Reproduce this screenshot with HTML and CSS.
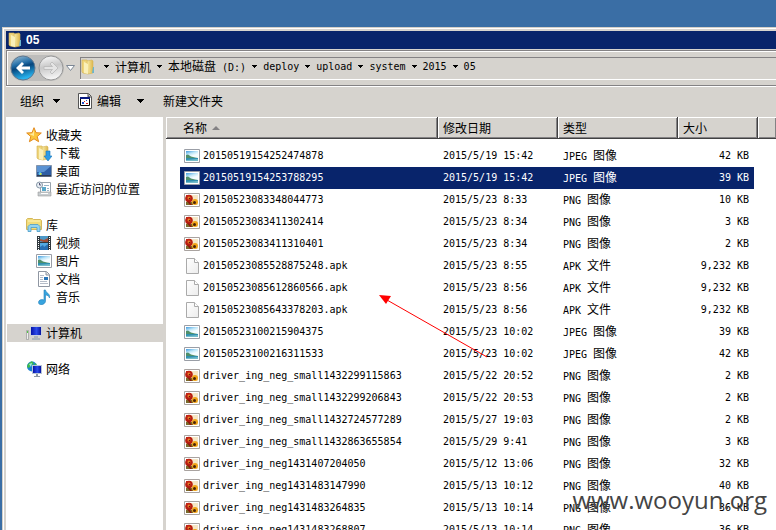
FILE: index.html
```html
<!DOCTYPE html>
<html lang="zh-CN">
<head>
<meta charset="utf-8">
<title>05</title>
<link rel="stylesheet" href="styles.css">
</head>
<body>
<svg class="sprite" aria-hidden="true">
  <defs>
    <linearGradient id="gold" x2="1"><stop stop-color="#f8edaa"/><stop offset="1" stop-color="#ddb64c"/></linearGradient>
    <linearGradient id="sky" y2="1" x2=".4"><stop stop-color="#3f9be0"/><stop offset=".35" stop-color="#bfe6f8"/><stop offset=".6" stop-color="#f4fcff"/></linearGradient>
    <linearGradient id="blue" y2="1" x2=".3"><stop stop-color="#a6c6d8"/><stop offset=".4" stop-color="#256fa8"/><stop offset=".55" stop-color="#06457c"/><stop offset="1" stop-color="#28b3ee"/></linearGradient>
    <linearGradient id="silver" y2="1" x2=".2"><stop stop-color="#ffffff"/><stop offset=".5" stop-color="#c8c8c8"/><stop offset="1" stop-color="#f4f4f4"/></linearGradient>
    <linearGradient id="screen" x2="1"><stop stop-color="#0612a8"/><stop offset=".55" stop-color="#2b4bea"/><stop offset="1" stop-color="#0714a0"/></linearGradient>
    <linearGradient id="paper" x2="1" y2="1"><stop stop-color="#ffffff"/><stop offset="1" stop-color="#ececec"/></linearGradient>
  </defs>
  <symbol id="folder" viewBox="0 0 16 16">
    <path d="M1 1h5l1 2v12l-5-1-1-1z" fill="#eed57c" stroke="#d3b04c" stroke-width=".6"/>
    <path d="M6 2l5-1 1 1v12l-5 1z" fill="url(#gold)" stroke="#d6b558" stroke-width=".6"/>
    <path d="M3 3l4 2v10l-4-1z" fill="#faf0b8"/>
    <path d="M12 8h1v6h-2z" fill="#6bb5cf"/>
  </symbol>
  <symbol id="jpeg" viewBox="0 0 16 16">
    <path d="M.5 1.500h15v13H.5z" fill="#fff" stroke="#9a9ea6"/>
    <path d="M2 3h12v10H2z" fill="url(#sky)"/>
    <path d="M2 7l2-.5 3 2 4 1 3 .5v1H2z" fill="#4f8f6a"/>
    <path d="M2 10h12v3H2z" fill="#2f8fae"/>
    <path d="M2 12l12-1v2H2z" fill="#74bccb"/>
  </symbol>
  <symbol id="png" viewBox="0 0 16 16">
    <path d="M.5 1.500h15v13H.5z" fill="#fff" stroke="#a9a3a0"/>
    <path d="M2 3h12v10H2z" fill="#f6e6c4"/>
    <path d="M2 10h7v3H2z" fill="#7a6a2a"/>
    <circle cx="5" cy="6.500" r="3.800" fill="#b81c10"/>
    <path d="M2 3h4v2H2z" fill="#c22413"/>
    <circle cx="5" cy="6" r="1.500" fill="#f0862a"/><circle cx="5.500" cy="6.500" r=".8" fill="#6a1205"/>
    <path d="M3 9l3 1 2 3H6z" fill="#8c1a0c"/>
    <circle cx="11" cy="10" r="3" fill="#f0a418"/>
    <circle cx="10.500" cy="10.500" r="1.500" fill="#4a240a"/>
  </symbol>
  <symbol id="blank" viewBox="0 0 16 16">
    <path d="M2.500.5h8l4 4v11h-12z" fill="url(#paper)" stroke="#aaa"/><path d="M10.500.5v4h4" fill="#fff" stroke="#aaa"/>
  </symbol>
  <symbol id="star" viewBox="0 0 16 16">
    <path d="M8 .7l2 5 5.300.3-4.100 3.500 1.400 5.200L8 11.800l-4.600 2.900 1.400-5.200L.7 6l5.300-.3z" fill="#fbc63c" stroke="#e28a1e"/><path d="M8 3v6L3 7l3.500-.5z" fill="#ffe99b"/>
  </symbol>
  <symbol id="download" viewBox="0 0 16 16">
    <use href="#folder"/><path d="M10 6h4v5h2l-4 5-4-5h2z" fill="#2e9be5" stroke="#1676b8" stroke-width=".6"/>
  </symbol>
  <symbol id="desktop" viewBox="0 0 16 16">
    <path d="M.5 2.500h15v11H.5z" fill="#2e5ea4" stroke="#8294ab"/><path d="M1 3h14L8 9H1z" fill="#5b93d3"/><path d="M1 12h14v1.500H1z" fill="#2c3a52"/><circle cx="4" cy="10.500" r="1.500" fill="#62c9ef"/><path d="M4 10h1.500v2H4z" fill="#c8e34d"/>
  </symbol>
  <symbol id="recent" viewBox="0 0 16 16">
    <path d="M4.500 1.500h10v10h-10z" fill="#fff" stroke="#9aa4ad"/><path d="M8 4.500h5M11 7.500h2M11 9.500h2" stroke="#9ab4c6"/><path d="M6 6h4v4H6z" fill="#59a7c9"/><path d="M2 11h13v4H2z" fill="#c7cccf" stroke="#9c9c9c" stroke-width=".6"/><path d="M5 12.500h7" stroke="#fff"/><circle cx="3.500" cy="4" r="3" fill="#e8eef3" stroke="#8596a6"/><path d="M3.500 2v2H5" fill="none" stroke="#557"/>
  </symbol>
  <symbol id="library" viewBox="0 0 16 16">
    <path d="M.5 2.500l1-1h5l1 1h7l1 1v9H.5z" fill="#f1dc7b" stroke="#d6b85a"/><path d="M2 4h12" stroke="#fff5ba"/><path d="M4 7.500h8l2 2v5h-3v-4H5v4H2v-5z" fill="#93d4f1" stroke="#4a9cc9" stroke-width=".8"/>
  </symbol>
  <symbol id="video" viewBox="0 0 16 16">
    <path d="M1 1h14v14H1z" fill="#30383d"/><path d="M4 1h8v6H4z" fill="#4c98c7"/><path d="M4 8h8v7H4z" fill="#54a9e0"/><path d="M4 4l4 1 4-2v4H8L4 6z" fill="#a24d34"/><path d="M4 12l3-2 1 2 4-3v6H4z" fill="#286fb2"/><path d="M2.500 2v13M13.500 2v13" stroke="#fff" stroke-dasharray="1 1"/>
  </symbol>
  <symbol id="document" viewBox="0 0 16 16">
    <path d="M2.500.5h8l3 3v12h-11z" fill="#fff" stroke="#8f96a2"/><path d="M10 1v3h3" fill="#ddd" stroke="#8f96a2"/><path d="M4 4.500h4M4 6.500h3M4 8.500h3M4 10.500h7M4 12.500h8" stroke="#b5bcc8"/><path d="M8 6h4v3H8z" fill="#2874b7"/>
  </symbol>
  <symbol id="music" viewBox="0 0 16 16">
    <path d="M8 1h1.500c0 3 5 3 4 8-.6-2-2-3-4-3v6c0 4-7 5-7 1.500C2.500 11 5 10 8 11z" fill="#37a4df" stroke="#2681bb" stroke-width=".6"/>
  </symbol>
  <symbol id="computer" viewBox="0 0 16 16">
    <path d="M.5 5.500h2v9h-2z" fill="#eee" stroke="#999" stroke-width=".7"/><path d="M1 6h1v2H1z" fill="#55c845"/><path d="M4 1h12v10H4z" fill="#cad2dc"/><path d="M5 2h10v8H5z" fill="url(#screen)"/><path d="M8 11h4v2h2v2H6v-2h2z" fill="#adb5bd"/>
  </symbol>
  <symbol id="network" viewBox="0 0 16 16">
    <circle cx="6" cy="5.500" r="5" fill="#1c83d1"/><path d="M2 3l4-3 2 3-3 1-2 3-2-1zM7 5l3-3 1 4-4 4-1-3z" fill="#40bb46"/><path d="M3 3l3-1-1 4z" fill="#9ceadb"/><path d="M6 4h10v9H6z" fill="#b8c5d5"/><path d="M7 5h8v7H7z" fill="url(#screen)"/><path d="M10 13h2v2h2v1H8v-1h2z" fill="#8d98a5"/>
  </symbol>
  <symbol id="edit" viewBox="0 0 14 16">
    <path d="M.5.5h10l3 3v12H.5z" fill="#fff" stroke="#555"/><path d="M10 1v3h3" fill="#aaa" stroke="#555"/><path d="M2.500 4.500h9v8h-9z" fill="#fff" stroke="#000"/><path d="M2 4h10v2H2z" fill="#091a80"/><path d="M4 9h2v2H4zM8 7h1v1H8z" fill="#2250ca"/><path d="M6 8h1v1H6zM8 10h2v1H8z" fill="#df2020"/>
  </symbol>
  <symbol id="caret" viewBox="0 0 5 3"><path d="M0 0h5v1H4v1H3v1H2V2H1V1H0z"/></symbol>
</svg>

<main class="window">
  <header class="titlebar"><svg class="icon"><use href="#folder"/></svg><h1>05</h1></header>

  <div class="navbar">
    <div class="travel">
      <button aria-label="后退"><svg viewBox="0 0 26 26"><circle cx="13" cy="13" r="12" fill="url(#blue)" stroke="#607890"/><path d="M6 13l6-6 2 2-2.500 2.500H20v3h-8.500L14 17l-2 2z" fill="#fff"/></svg></button>
      <button aria-label="前进"><svg viewBox="0 0 26 26"><circle cx="13" cy="13" r="12" fill="url(#silver)" stroke="#999"/><path d="M20 13l-6-6-2 2 2.500 2.500H6v3h8.500L12 17l2 2z" fill="#e4e4e4" stroke="#b8b8b8" stroke-width=".8"/></svg></button>
    </div>
    <button class="history" aria-label="最近的页面"><svg viewBox="0 0 9 6"><path d="M.5.5h8l-4 5z" fill="#fff" stroke="#7c8795"/></svg></button>
    <nav class="address" aria-label="地址">
      <svg class="icon"><use href="#folder"/></svg>
      <svg class="caret"><use href="#caret"/></svg>
      <a href="#" class="zh">计算机</a><svg class="caret"><use href="#caret"/></svg>
      <a href="#"><span class="zh">本地磁盘</span> (D:)</a><svg class="caret"><use href="#caret"/></svg>
      <a href="#">deploy</a><svg class="caret"><use href="#caret"/></svg>
      <a href="#">upload</a><svg class="caret"><use href="#caret"/></svg>
      <a href="#">system</a><svg class="caret"><use href="#caret"/></svg>
      <a href="#">2015</a><svg class="caret"><use href="#caret"/></svg>
      <a href="#">05</a>
    </nav>
  </div>

  <div class="toolbar">
    <button class="zh">组织<svg class="drop" viewBox="0 0 7 4"><path d="M0 0h7v1H6v1H5v1H4v1H3V3H2V2H1V1H0z"/></svg></button>
    <button class="zh edit"><svg class="edit-icon"><use href="#edit"/></svg>编辑</button>
    <button class="more" aria-label="更多"><svg class="drop" viewBox="0 0 7 4"><path d="M0 0h7v1H6v1H5v1H4v1H3V3H2V2H1V1H0z"/></svg></button>
    <button class="zh">新建文件夹</button>
  </div>

  <div class="content">
    <aside class="sidebar zh">
      <ul>
        <li><a href="#"><svg class="icon"><use href="#star"/></svg>收藏夹</a></li>
        <li class="child"><a href="#"><svg class="icon"><use href="#download"/></svg>下载</a></li>
        <li class="child"><a href="#"><svg class="icon"><use href="#desktop"/></svg>桌面</a></li>
        <li class="child"><a href="#"><svg class="icon"><use href="#recent"/></svg>最近访问的位置</a></li>
      </ul>
      <ul>
        <li><a href="#"><svg class="icon"><use href="#library"/></svg>库</a></li>
        <li class="child"><a href="#"><svg class="icon"><use href="#video"/></svg>视频</a></li>
        <li class="child"><a href="#"><svg class="icon"><use href="#jpeg"/></svg>图片</a></li>
        <li class="child"><a href="#"><svg class="icon"><use href="#document"/></svg>文档</a></li>
        <li class="child"><a href="#"><svg class="icon"><use href="#music"/></svg>音乐</a></li>
      </ul>
      <ul><li class="current"><a href="#"><svg class="icon"><use href="#computer"/></svg>计算机</a></li></ul>
      <ul><li><a href="#"><svg class="icon"><use href="#network"/></svg>网络</a></li></ul>
    </aside>

    <section class="files">
      <table>
        <colgroup><col class="c-name"><col class="c-date"><col class="c-type"><col class="c-size"><col></colgroup>
        <thead><tr><th>名称<svg class="sort" viewBox="0 0 8 4"><path d="M4 0l4 4H0z"/></svg></th><th>修改日期</th><th>类型</th><th>大小</th><th></th></tr></thead>
        <tbody>
          <tr><td><svg class="icon"><use href="#jpeg"/></svg>20150519154252474878</td><td>2015/5/19 15:42</td><td>JPEG <span class="zh">图像</span></td><td>42 KB</td></tr>
          <tr class="selected"><td><svg class="icon"><use href="#jpeg"/></svg>20150519154253788295</td><td>2015/5/19 15:42</td><td>JPEG <span class="zh">图像</span></td><td>39 KB</td></tr>
          <tr><td><svg class="icon"><use href="#png"/></svg>20150523083348044773</td><td>2015/5/23 8:33</td><td>PNG <span class="zh">图像</span></td><td>10 KB</td></tr>
          <tr><td><svg class="icon"><use href="#png"/></svg>20150523083411302414</td><td>2015/5/23 8:34</td><td>PNG <span class="zh">图像</span></td><td>3 KB</td></tr>
          <tr><td><svg class="icon"><use href="#png"/></svg>20150523083411310401</td><td>2015/5/23 8:34</td><td>PNG <span class="zh">图像</span></td><td>2 KB</td></tr>
          <tr><td><svg class="icon"><use href="#blank"/></svg>20150523085528875248.apk</td><td>2015/5/23 8:55</td><td>APK <span class="zh">文件</span></td><td>9,232 KB</td></tr>
          <tr><td><svg class="icon"><use href="#blank"/></svg>20150523085612860566.apk</td><td>2015/5/23 8:56</td><td>APK <span class="zh">文件</span></td><td>9,232 KB</td></tr>
          <tr><td><svg class="icon"><use href="#blank"/></svg>20150523085643378203.apk</td><td>2015/5/23 8:56</td><td>APK <span class="zh">文件</span></td><td>9,232 KB</td></tr>
          <tr><td><svg class="icon"><use href="#jpeg"/></svg>20150523100215904375</td><td>2015/5/23 10:02</td><td>JPEG <span class="zh">图像</span></td><td>39 KB</td></tr>
          <tr><td><svg class="icon"><use href="#jpeg"/></svg>20150523100216311533</td><td>2015/5/23 10:02</td><td>JPEG <span class="zh">图像</span></td><td>42 KB</td></tr>
          <tr><td><svg class="icon"><use href="#png"/></svg>driver_ing_neg_small1432299115863</td><td>2015/5/22 20:52</td><td>PNG <span class="zh">图像</span></td><td>2 KB</td></tr>
          <tr><td><svg class="icon"><use href="#png"/></svg>driver_ing_neg_small1432299206843</td><td>2015/5/22 20:53</td><td>PNG <span class="zh">图像</span></td><td>2 KB</td></tr>
          <tr><td><svg class="icon"><use href="#png"/></svg>driver_ing_neg_small1432724577289</td><td>2015/5/27 19:03</td><td>PNG <span class="zh">图像</span></td><td>2 KB</td></tr>
          <tr><td><svg class="icon"><use href="#png"/></svg>driver_ing_neg_small1432863655854</td><td>2015/5/29 9:41</td><td>PNG <span class="zh">图像</span></td><td>3 KB</td></tr>
          <tr><td><svg class="icon"><use href="#png"/></svg>driver_ing_neg1431407204050</td><td>2015/5/12 13:06</td><td>PNG <span class="zh">图像</span></td><td>32 KB</td></tr>
          <tr><td><svg class="icon"><use href="#png"/></svg>driver_ing_neg1431483147990</td><td>2015/5/13 10:12</td><td>PNG <span class="zh">图像</span></td><td>40 KB</td></tr>
          <tr><td><svg class="icon"><use href="#png"/></svg>driver_ing_neg1431483264835</td><td>2015/5/13 10:14</td><td>PNG <span class="zh">图像</span></td><td>36 KB</td></tr>
          <tr><td><svg class="icon"><use href="#png"/></svg>driver_ing_neg1431483268807</td><td>2015/5/13 10:14</td><td>PNG <span class="zh">图像</span></td><td>36 KB</td></tr>
        </tbody>
      </table>
      <svg class="pointer" viewBox="0 0 110 64" aria-hidden="true"><path d="M8 5l100 57" stroke="#f00" fill="none"/><path d="M0 0l12 1-5 8z" fill="#f00"/></svg>
    </section>
  </div>
</main>
<div class="watermark">www.wooyun.org</div>
</body>
</html>
```
FILE: styles.css
```css
* { box-sizing: border-box; }

body {
  margin: 0;
  height: 100vh;
  overflow: hidden;
  position: relative;
  padding: 27px 0 0 2px;
  background: #3a6ea5;
  color: #000;
  font: 10px/18px "DejaVu Sans Mono", "Noto Sans CJK SC", monospace;
}

.sprite { position: absolute; width: 0; height: 0; }
.zh { font: 12px/18px "Noto Sans CJK SC", sans-serif; }
a { color: inherit; text-decoration: none; }
ul { list-style: none; margin: 0; padding: 0; }

button {
  display: flex;
  align-items: center;
  border: 0;
  padding: 0;
  background: none;
  color: inherit;
}

.icon { width: 16px; height: 16px; flex: none; }

.window {
  display: flex;
  flex-direction: column;
  height: 100%;
  padding: 3px 0 0 3px;
  border: solid #d4d0c8;
  border-width: 1px 0 0 1px;
  background: #d6d3ce;
  box-shadow: inset 1px 1px #fff;
}

.titlebar {
  display: flex;
  align-items: center;
  gap: 2px;
  flex: none;
  height: 18px;
  padding-left: 2px;
  background: #08246b;
  color: #fff;
}

h1 { margin: 0; font: bold 12px/18px "Liberation Sans", sans-serif; }

.navbar {
  display: flex;
  align-items: center;
  flex: none;
  height: 36px;
  margin-top: 1px;
  padding-left: 3px;
  border: solid #848284;
  border-width: 1px 0 1px 1px;
  box-shadow: inset 1px 1px #fff, 0 1px #fff;
}

.travel { display: flex; gap: 2px; border-radius: 13px; background: #bebdbb; }
.travel button, .travel svg { width: 26px; height: 26px; }
.history { margin-left: 2px; }
.history svg { width: 9px; height: 6px; }

.address {
  display: flex;
  align-items: center;
  flex: 1;
  height: 22px;
  margin-left: 5px;
  padding-bottom: 4px;
  border: solid #848284;
  border-width: 1px 0 0 1px;
  box-shadow: 0 1px #fff;
  white-space: pre;
}

.caret { width: 5px; height: 3px; margin: 0 6px; flex: none; }
.address .icon + .caret { margin-left: 7px; }

.toolbar {
  display: flex;
  align-items: center;
  flex: none;
  height: 31px;
  padding: 0 0 2px 14px;
}

.drop { width: 7px; height: 4px; }
.toolbar .drop { margin-left: 9px; }
.edit { gap: 5px; margin-left: 18px; }
.edit-icon { width: 14px; height: 16px; }
.more { margin: 0 19px 0 7px; }

.content { display: flex; flex: 1; min-height: 0; }

.sidebar {
  flex: none;
  width: 157px;
  padding: 9px 0 0 1px;
  background: #fff;
}

.sidebar ul { margin-bottom: 18px; }
.sidebar a { display: flex; align-items: center; gap: 4px; padding-left: 19px; }
.sidebar .child a { padding-left: 29px; }
.sidebar .current { background: #d6d3ce; }

.files {
  position: relative;
  flex: 1;
  min-width: 0;
  margin-left: 3px;
  overflow: hidden;
  background: #fff;
}

table { width: 100%; table-layout: fixed; border-spacing: 0; }
.c-name { width: 272px; }
.c-date, .c-type { width: 120px; }
.c-size { width: 80px; }

th {
  height: 22px;
  padding: 0 0 0 5px;
  background: #d6d3ce;
  border-right: 1px solid #424142;
  border-bottom: 1px solid #424142;
  box-shadow: inset 1px 1px #fff, inset -1px -1px #848284;
  font: 12px/20px "Noto Sans CJK SC", sans-serif;
  text-align: left;
}

th:first-child { padding-left: 17px; }
th:last-child { border-right: 0; }
.sort { width: 8px; height: 4px; margin-left: 5px; vertical-align: 3px; fill: #848284; }

tbody::before { content: ""; display: block; height: 6px; }

td { height: 22px; padding: 0 0 0 5px; white-space: nowrap; line-height: 18px; }
td .zh { line-height: 16px; }
td:first-child { padding-left: 4px; border-left: 14px solid #fff; }
td:nth-child(4) { padding: 0 5px 0 0; border-right: 4px solid #fff; text-align: right; }
td .icon { margin-right: 3px; vertical-align: middle; }
.selected td { background: #08246b; color: #fff; }

.pointer { position: absolute; left: 213px; top: 178px; width: 110px; height: 64px; }

.watermark {
  position: absolute;
  right: 9px;
  bottom: 15px;
  color: #444;
  font: 24px/30px "Open Sans", sans-serif;
}
```
